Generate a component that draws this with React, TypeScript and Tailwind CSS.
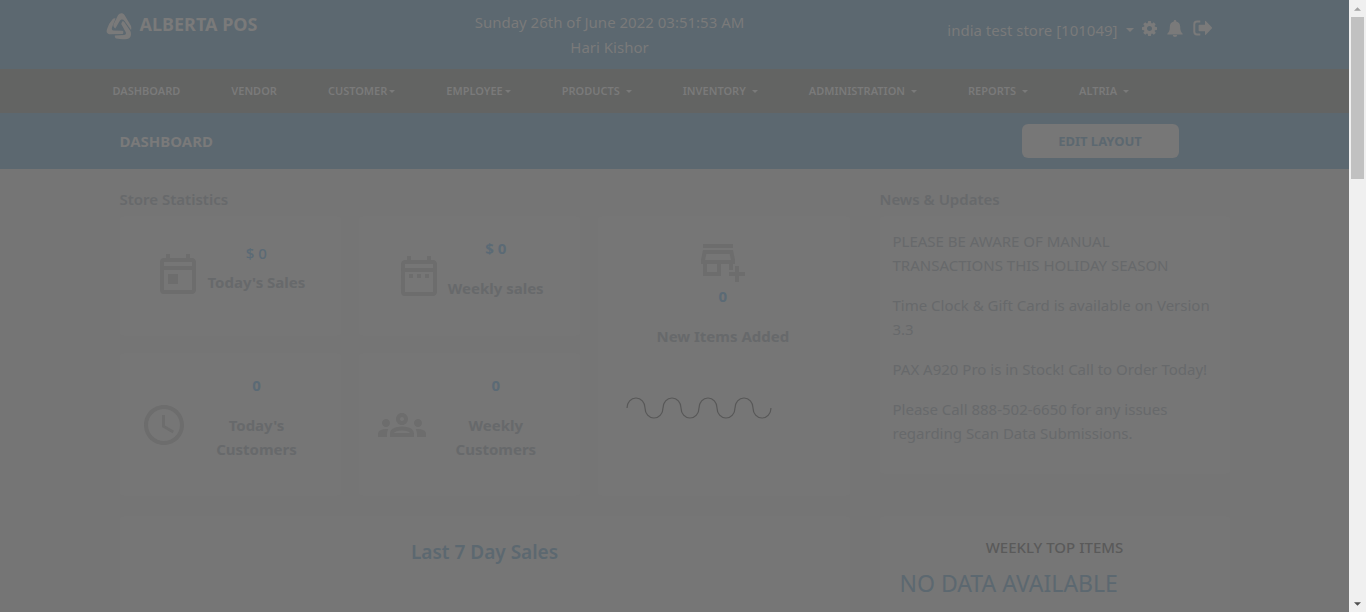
import type { ReactNode } from "react";
import {
  MdAccessTime,
  MdOutlineAddBusiness,
  MdOutlineDateRange,
  MdOutlineGroups,
  MdOutlineToday,
} from "react-icons/md";

const menu = [
  { label: "DASHBOARD" },
  { label: "VENDOR" },
  { label: "CUSTOMER", caret: "ml-0.5" },
  { label: "EMPLOYEE", caret: "ml-0.5" },
  { label: "PRODUCTS", caret: "ml-1.5" },
  { label: "INVENTORY", caret: "ml-1.5" },
  { label: "ADMINISTRATION", caret: "ml-1.5" },
  { label: "REPORTS", caret: "ml-1.5" },
  { label: "ALTRIA", caret: "ml-1.5" },
];

const news = [
  "PLEASE BE AWARE OF MANUAL TRANSACTIONS THIS HOLIDAY SEASON",
  "Time Clock & Gift Card is available on Version 3.3",
  "PAX A920 Pro is in Stock! Call to Order Today!",
  "Please Call 888-502-6650 for any issues regarding Scan Data Submissions.",
];

function Logo() {
  return (
    <svg viewBox="0 0 26 28" className="h-7 w-[26px]" fill="currentColor" aria-hidden="true">
      <path d="M7.600 12 12 3.200C13.400.6 17 .5 18.500 3L24.800 13.500C25.500 15 25.500 16.600 25 18L18.400 8.800C17 7 14.900 7 13.700 9L9.400 16.400C7.700 15.900 6.900 13.600 7.600 12Z" />
      <path d="M7 6.800C7.900 6 9 6 9.600 6.400L6 15.400C5.500 17 6 18.300 7.500 18.400L16.500 18.800C17.800 19.100 17.600 20.800 16.800 22L4.200 22.200C1 22.200 0 19.700 1 17.200Q2.800 11.200 7 6.800Z" />
      <path d="M16.200 9.400C17.200 8.800 17.900 9.400 18.600 10.400L24.200 18.800C26 22.200 24.900 26.500 21.400 26.900Q15.400 27.500 10.400 26.500C9.200 26.200 8.700 24.900 8.800 23.400L17.800 23C20 22.800 20.400 21.400 19.600 20L15.200 12Z" />
    </svg>
  );
}

function Caret({ className }: { className: string }) {
  return (
    <svg viewBox="0 0 8 4" className={className} fill="currentColor" aria-hidden="true">
      <path d="M0 0h8L4 4Z" />
    </svg>
  );
}

function Gear() {
  return (
    <svg viewBox="0 0 1536 1536" className="size-[15px]" fill="currentColor" aria-hidden="true">
      <path d="M1024 768q0-106-75-181t-181-75-181 75-75 181 75 181 181 75 181-75 75-181zm512-109v222q0 12-8 23t-20 13l-185 28q-19 54-39 91 35 50 107 138 10 12 10 25t-9 23q-27 37-99 108t-94 71q-12 0-26-9l-138-108q-44 23-91 38-16 136-29 186-7 28-36 28H657q-14 0-24.500-8.500T621 1506l-28-184q-49-16-90-37l-141 107q-10 9-25 9-14 0-25-11-126-114-165-168-7-10-7-23 0-12 8-23 15-21 51-66.500t54-70.500q-27-50-41-99L29 913q-13-2-21-12.500T0 877V655q0-12 8-23t19-13l186-28q14-46 39-92-40-57-107-138-10-12-10-24 0-10 9-23 26-36 98.500-107.500T337 135q13 0 26 10l138 107q44-23 91-38 16-136 29-186 7-28 36-28h222q14 0 24.500 8.500T915 30l28 184q49 16 90 37l142-107q9-9 24-9 13 0 25 10 129 119 165 170 7 8 7 22 0 12-8 23-15 21-51 66.500t-54 70.500q26 50 41 98l183 28q13 2 21 12.500t8 23.500z" />
    </svg>
  );
}

function Bell() {
  return (
    <svg viewBox="0 0 16 17" className="h-[17px] w-4" fill="currentColor" aria-hidden="true">
      <path d="M8 0a1.200 1.200 0 0 1 1.200 1.500C11.800 2.100 13.200 4.100 13.200 6.800c0 3.600.8 5.700 2.500 6.900v.8H.3v-.8C2 12.500 2.800 10.400 2.800 6.800c0-2.700 1.400-4.700 4-5.300A1.200 1.200 0 0 1 8 0ZM5.800 15h4.400a2.200 2 0 0 1-4.400 0Z" />
    </svg>
  );
}

function SignOut() {
  return (
    <svg viewBox="0 0 19 16" className="h-4 w-[19px]" fill="currentColor" aria-hidden="true">
      <path d="M7.300.5v2H4A1.700 1.700 0 0 0 2.300 4.200v7.500A1.700 1.700 0 0 0 4 13.400h3.300v2H4A3.700 3.700 0 0 1 .3 11.700V4.200A3.700 3.700 0 0 1 4 .5Z" />
      <path d="M12 1.300q0-1 .8-.3l6 6.300q.5.600 0 1.200l-6 6.300q-.8.700-.8-.3V11.200H6.400a.8.8 0 0 1-.8-.8V5.500a.8.800 0 0 1 .8-.8H12Z" />
    </svg>
  );
}

function Stat({
  icon,
  value,
  label,
  className,
  textClass,
  valueClass = "font-bold",
}: {
  icon: ReactNode;
  value: string;
  label: string;
  className: string;
  textClass: string;
  valueClass?: string;
}) {
  return (
    <article className={`flex items-center rounded bg-[#767676] ${className}`}>
      <div className="shrink-0 text-[#6d6d6d]">{icon}</div>
      <div className={`flex flex-col text-center ${textClass}`}>
        <p className={`text-[#5b6a75] ${valueClass}`}>{value}</p>
        <h3 className="font-bold">{label}</h3>
      </div>
    </article>
  );
}

export default function App() {
  return (
    <div className="flex h-screen overflow-hidden bg-[#757575] font-['Noto_Sans','Open_Sans',sans-serif] text-[15px] leading-6 text-[#67696b]">
      <div className="min-w-0 flex-1 overflow-hidden">
        <header className="h-[69px] bg-[#5c6870] text-[#7a7a7a]">
          <div className="mx-auto flex max-w-[1140px] items-start justify-between">
            <a href="#home" className="flex w-[200px] items-start gap-2 pt-3 pl-px text-[18px] font-bold">
              <Logo />
              <span>ALBERTA POS</span>
            </a>
            <div className="pt-2.5 text-center leading-[25px]">
              <p>Sunday 26th of June 2022 03:51:53 AM</p>
              <p>Hari Kishor</p>
            </div>
            <div className="flex w-[330px] items-start justify-end gap-2 pt-[18px] pr-[33px]">
              <button type="button" className="flex items-center gap-2">
                india test store [101049]
                <Caret className="h-1 w-2" />
              </button>
              <button type="button" aria-label="Settings" className="pt-[3px]">
                <Gear />
              </button>
              <button type="button" aria-label="Notifications" className="px-0.5 pt-0.5">
                <Bell />
              </button>
              <button type="button" aria-label="Sign out" className="pt-0.5">
                <SignOut />
              </button>
            </div>
          </div>
        </header>

        <nav className="bg-[#636463] text-[11px] font-semibold text-[#7a7a7a]">
          <ul className="mx-auto flex h-11 max-w-[1140px] items-center gap-[51px] pl-2">
            {menu.map((item) => (
              <li key={item.label}>
                <a href={`#${item.label.toLowerCase()}`} className="flex items-center">
                  {item.label}
                  {item.caret && <Caret className={`h-[3px] w-1.5 ${item.caret}`} />}
                </a>
              </li>
            ))}
          </ul>
        </nav>

        <section className="bg-[#5c6870]">
          <div className="mx-auto flex h-14 max-w-[1140px] items-center justify-between pr-[66px] pl-[15px]">
            <h1 className="font-bold text-[#7a7a7a]">DASHBOARD</h1>
            <button
              type="button"
              className="h-[34px] w-[157px] rounded-md bg-[#777777] text-[13px] font-bold text-[#5c6870]"
            >
              EDIT LAYOUT
            </button>
          </div>
        </section>

        <main className="mx-auto grid max-w-[1140px] grid-cols-[730fr_350fr] gap-x-[30px] px-[15px] pt-[18px]">
          <section>
            <h2 className="mb-[5px] font-semibold">Store Statistics</h2>
            <div className="grid grid-cols-[221fr_221fr_251fr] grid-rows-[120px_143px] gap-x-[18px] gap-y-[17px]">
              <Stat
                className="pl-[34px]"
                textClass="ml-1.5 gap-[5px] pb-[18px]"
                valueClass="font-medium"
                icon={<MdOutlineToday size={48} />}
                value="$ 0"
                label="Today's Sales"
              />
              <Stat
                className="pl-9"
                textClass="ml-[5px] gap-4 pb-4"
                icon={<MdOutlineDateRange size={48} />}
                value="$ 0"
                label="Weekly sales"
              />
              <article className="row-span-2 flex flex-col items-center rounded bg-[#767676] pt-5 pr-0.5 font-bold">
                <MdOutlineAddBusiness size={48} className="text-[#6d6d6d]" />
                <p className="text-[#5b6a75]">0</p>
                <h3 className="mt-4">New Items Added</h3>
                <svg
                  viewBox="0 0 148 24"
                  className="mt-12 mr-12 h-6 w-[148px]"
                  fill="none"
                  stroke="#585858"
                  strokeWidth="1.200"
                  aria-hidden="true"
                >
                  <path d="M2 12a9 10 0 0 1 18 0a9 10 0 0 0 18 0a9 10 0 0 1 18 0a9 10 0 0 0 18 0a9 10 0 0 1 18 0a9 10 0 0 0 18 0a9 10 0 0 1 18 0a9 10 0 0 0 18 0" />
                </svg>
              </article>
              <Stat
                className="pl-5"
                textClass="ml-5 w-[98px] gap-4 pb-4"
                icon={<MdAccessTime size={48} />}
                value="0"
                label="Today's Customers"
              />
              <Stat
                className="pl-[19px]"
                textClass="ml-[21px] w-[98px] gap-4 pb-4"
                icon={<MdOutlineGroups size={48} />}
                value="0"
                label="Weekly Customers"
              />
            </div>
          </section>

          <section>
            <h2 className="mb-[5px] font-semibold">News &amp; Updates</h2>
            <div className="flex h-[258px] flex-col gap-4 rounded bg-[#767676] px-[13px] pt-[13px]">
              {news.map((text) => (
                <p key={text}>{text}</p>
              ))}
            </div>
          </section>

          <section className="mt-5 h-[420px] rounded bg-[#767676] pt-6 text-center">
            <h2 className="text-[19px] font-semibold text-[#5c6870]">Last 7 Day Sales</h2>
          </section>

          <section className="mt-5 h-[420px] rounded bg-[#767676] px-5 pt-[19px]">
            <h2 className="text-center font-medium text-[#5a5a5a]">WEEKLY TOP ITEMS</h2>
            <p className="mt-2 text-[23px] leading-8 text-[#5c6870]">NO DATA AVAILABLE</p>
          </section>
        </main>
      </div>

      <div className="flex w-[17px] shrink-0 flex-col items-center bg-[#f0f0f0]" aria-hidden="true">
        <div className="flex h-[17px] items-center">
          <Caret className="h-1 w-[7px] rotate-180 text-[#a3a3a3]" />
        </div>
        <div className="h-[162px] w-[13px] bg-[#c1c1c1]" />
        <div className="mt-auto flex h-[17px] items-center">
          <Caret className="h-1 w-[7px] text-[#505050]" />
        </div>
      </div>
    </div>
  );
}
